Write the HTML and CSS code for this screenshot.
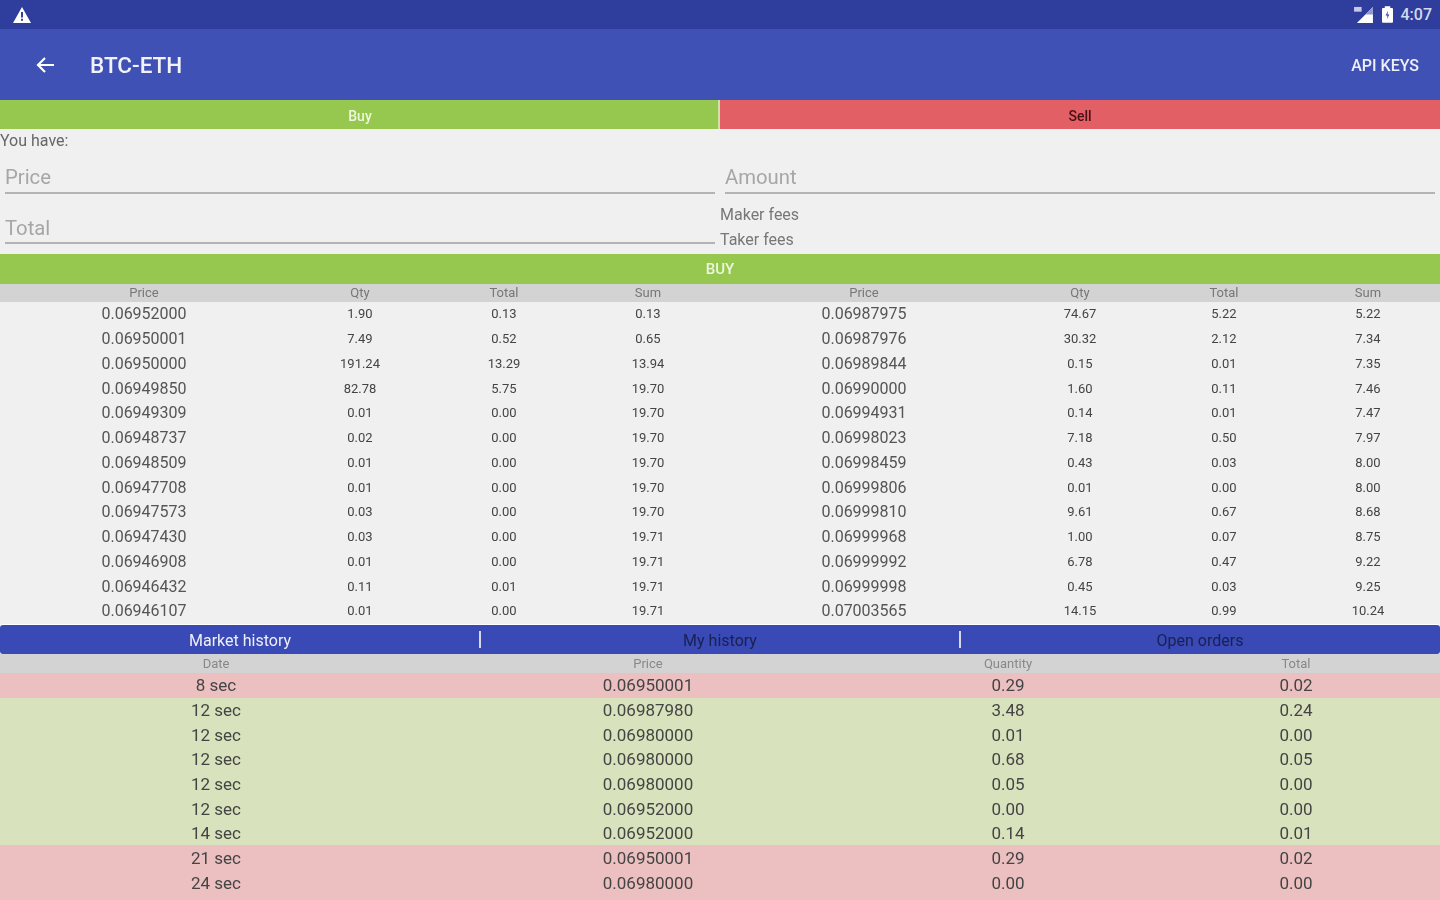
FILE: index.html
```html
<!DOCTYPE html>
<html lang="en">
<head>
<meta charset="utf-8">
<title>BTC-ETH</title>
<link rel="stylesheet" href="styles.css">
</head>
<body>
<div class="page">
  <div class="status">
    <svg class="warn" viewBox="0 0 18 16"><path fill="#fff" d="M9 0 18 16H0Z"/><path fill="#33419b" d="M8 5h2v5.500H8zM8 11.800h2v2H8z"/></svg>
    <div class="status-right">
      <svg class="signal" viewBox="0 0 20 18"><path fill="#fff" d="M20 1v17H3Z"/><path fill="#8f98cf" d="M20 1v8h-8Z"/><rect x="0" y="1" width="8" height="5" fill="#dfe2f3" opacity=".85"/></svg>
      <svg class="battery" viewBox="0 0 12 18"><path fill="#fff" d="M3 2V0h6v2h2a1 1 0 0 1 1 1v14a1 1 0 0 1-1 1H1a1 1 0 0 1-1-1V3a1 1 0 0 1 1-1Z"/><path fill="#33419b" d="M6.500 5 4 10h2l-.5 4L8 9H6Z"/></svg>
      <span class="clock">4:07</span>
    </div>
  </div>
  <header class="appbar">
    <svg class="back" viewBox="0 0 18 16"><path fill="none" stroke="#fff" stroke-width="2.200" d="M18 8H2M9 1 2 8l7 7"/></svg>
    <span class="title">BTC-ETH</span>
    <span class="action">API KEYS</span>
  </header>
  <div class="side-tabs">
    <div class="side-tab buy-tab">Buy</div>
    <div class="side-tab sell-tab">Sell</div>
  </div>
  <div class="have">You have:</div>
  <div class="form">
    <div class="field"><span>Price</span></div>
    <div class="field"><span>Amount</span></div>
    <div class="field total-field"><span>Total</span></div>
    <div class="fees"><span>Maker fees</span><span>Taker fees</span></div>
  </div>
  <div class="buy-btn">BUY</div>
  <div class="book">
    <div class="book-head">
      <span>Price</span><span>Qty</span><span>Total</span><span>Sum</span>
      <span>Price</span><span>Qty</span><span>Total</span><span>Sum</span>
    </div>
    <div class="book-row"><b>0.06952000</b><span>1.90</span><span>0.13</span><span>0.13</span><b>0.06987975</b><span>74.67</span><span>5.22</span><span>5.22</span></div>
    <div class="book-row"><b>0.06950001</b><span>7.49</span><span>0.52</span><span>0.65</span><b>0.06987976</b><span>30.32</span><span>2.12</span><span>7.34</span></div>
    <div class="book-row"><b>0.06950000</b><span>191.24</span><span>13.29</span><span>13.94</span><b>0.06989844</b><span>0.15</span><span>0.01</span><span>7.35</span></div>
    <div class="book-row"><b>0.06949850</b><span>82.78</span><span>5.75</span><span>19.70</span><b>0.06990000</b><span>1.60</span><span>0.11</span><span>7.46</span></div>
    <div class="book-row"><b>0.06949309</b><span>0.01</span><span>0.00</span><span>19.70</span><b>0.06994931</b><span>0.14</span><span>0.01</span><span>7.47</span></div>
    <div class="book-row"><b>0.06948737</b><span>0.02</span><span>0.00</span><span>19.70</span><b>0.06998023</b><span>7.18</span><span>0.50</span><span>7.97</span></div>
    <div class="book-row"><b>0.06948509</b><span>0.01</span><span>0.00</span><span>19.70</span><b>0.06998459</b><span>0.43</span><span>0.03</span><span>8.00</span></div>
    <div class="book-row"><b>0.06947708</b><span>0.01</span><span>0.00</span><span>19.70</span><b>0.06999806</b><span>0.01</span><span>0.00</span><span>8.00</span></div>
    <div class="book-row"><b>0.06947573</b><span>0.03</span><span>0.00</span><span>19.70</span><b>0.06999810</b><span>9.61</span><span>0.67</span><span>8.68</span></div>
    <div class="book-row"><b>0.06947430</b><span>0.03</span><span>0.00</span><span>19.71</span><b>0.06999968</b><span>1.00</span><span>0.07</span><span>8.75</span></div>
    <div class="book-row"><b>0.06946908</b><span>0.01</span><span>0.00</span><span>19.71</span><b>0.06999992</b><span>6.78</span><span>0.47</span><span>9.22</span></div>
    <div class="book-row"><b>0.06946432</b><span>0.11</span><span>0.01</span><span>19.71</span><b>0.06999998</b><span>0.45</span><span>0.03</span><span>9.25</span></div>
    <div class="book-row"><b>0.06946107</b><span>0.01</span><span>0.00</span><span>19.71</span><b>0.07003565</b><span>14.15</span><span>0.99</span><span>10.24</span></div>
  </div>
  <nav class="history-tabs">
    <div class="history-tab active">Market history</div>
    <div class="history-tab">My history</div>
    <div class="history-tab">Open orders</div>
  </nav>
  <div class="history">
    <div class="hist-head"><span>Date</span><span>Price</span><span>Quantity</span><span>Total</span></div>
    <div class="hist-row sell"><span>8 sec</span><span>0.06950001</span><span>0.29</span><span>0.02</span></div>
    <div class="hist-row buy"><span>12 sec</span><span>0.06987980</span><span>3.48</span><span>0.24</span></div>
    <div class="hist-row buy"><span>12 sec</span><span>0.06980000</span><span>0.01</span><span>0.00</span></div>
    <div class="hist-row buy"><span>12 sec</span><span>0.06980000</span><span>0.68</span><span>0.05</span></div>
    <div class="hist-row buy"><span>12 sec</span><span>0.06980000</span><span>0.05</span><span>0.00</span></div>
    <div class="hist-row buy"><span>12 sec</span><span>0.06952000</span><span>0.00</span><span>0.00</span></div>
    <div class="hist-row buy"><span>14 sec</span><span>0.06952000</span><span>0.14</span><span>0.01</span></div>
    <div class="hist-row sell"><span>21 sec</span><span>0.06950001</span><span>0.29</span><span>0.02</span></div>
    <div class="hist-row sell last"><span>24 sec</span><span>0.06980000</span><span>0.00</span><span>0.00</span></div>
  </div>
</div>
</body>
</html>
```
FILE: styles.css
```css
* { box-sizing: border-box; }
html, body { margin: 0; height: 100%; overflow: hidden; }
body { background: #f0f0f0; font-family: Roboto, "Liberation Sans", sans-serif; color: #333; }
.page { width: 1440px; height: 900px; display: flex; flex-direction: column; overflow: hidden; filter: blur(.7px); }

.status { height: 29px; background: #2f3d9c; display: flex; align-items: center; justify-content: space-between; padding: 0 8px 0 13px; flex: none; }
.warn { width: 18px; height: 16px; display: block; }
.status-right { display: flex; align-items: center; }
.signal { width: 19px; height: 17px; margin-right: 9px; }
.battery { width: 11px; height: 17px; margin-right: 8px; }
.clock { color: #d5d9ee; font-size: 16px; font-weight: 500; }

.appbar { height: 71px; background: #3f51b5; display: flex; align-items: center; padding: 0 21px 0 36px; color: #fff; flex: none; }
.back { width: 18px; height: 16px; margin-right: 36px; }
.title { font-size: 22.500px; font-weight: 500; color: #f2f3fa; margin-top: 1px; }
.action { margin-left: auto; font-size: 16px; font-weight: 500; color: #eef0f9; margin-top: 1px; }

.side-tabs { display: grid; grid-template-columns: 1fr 1fr; height: 29px; flex: none; }
.side-tab { display: flex; align-items: center; justify-content: center; padding-top: 2px; font-size: 14px; font-weight: 500; }
.buy-tab { background: #96c84f; color: #eef6e0; box-shadow: inset -2px 0 0 #cfe0a8; }
.sell-tab { background: #e25f66; color: #4a1014; }

.have { height: 25px; font-size: 16px; line-height: 24px; color: #666; flex: none; }
.form { display: grid; grid-template-columns: 1fr 1fr; grid-template-rows: 48px 52px; height: 100px; flex: none; }
.field { margin: 0 5px; height: 40px; padding-bottom: 3px; border-bottom: 2px solid #b4b4b4; display: flex; align-items: flex-end; font-size: 20.300px; color: #a6a6a6; }
.total-field { height: 42px; padding-bottom: 2px; }
.fees { display: flex; flex-direction: column; font-size: 16px; color: #777; line-height: 25px; }
.buy-btn { height: 30px; background: #96c84f; color: #eef6e0; display: flex; align-items: center; justify-content: center; font-size: 15px; font-weight: 500; flex: none; }

.book { flex: none; height: 341px; }
.book-head, .book-row { display: grid; grid-template-columns: repeat(2, 2fr 1fr 1fr 1fr); text-align: center; align-items: center; }
.book-head { height: 17.500px; background: #d3d3d3; font-size: 13px; color: #777; }
.book-row { height: 24.750px; font-size: 13px; color: #444; }
.book-row b { font-weight: 400; font-size: 16px; color: #555; }

.history-tabs { height: 29px; background: #3949b5; display: grid; grid-template-columns: repeat(3, 1fr); flex: none; border-radius: 3px; box-shadow: 0 -1px 0 #fff; }
.history-tab { display: flex; align-items: center; justify-content: center; padding-top: 2px; font-size: 16px; color: #1a2050; position: relative; }
.history-tab.active { color: #eef0fa; }
.history-tab + .history-tab::before { content: ""; position: absolute; left: -1px; top: 6px; bottom: 6px; width: 2px; background: #d5d9ef; }

.history { flex: 1; }
.hist-head, .hist-row { display: grid; grid-template-columns: 3fr 3fr 2fr 2fr; text-align: center; align-items: center; }
.hist-head { height: 19px; background: #d3d3d3; font-size: 13px; color: #888; }
.hist-row { height: 24.650px; font-size: 17px; color: #444; }
.hist-row.sell { background: #ecc0c0; }
.hist-row.buy { background: #d8e3bd; }
.hist-row.last { height: 31px; padding-bottom: 6px; }
```
